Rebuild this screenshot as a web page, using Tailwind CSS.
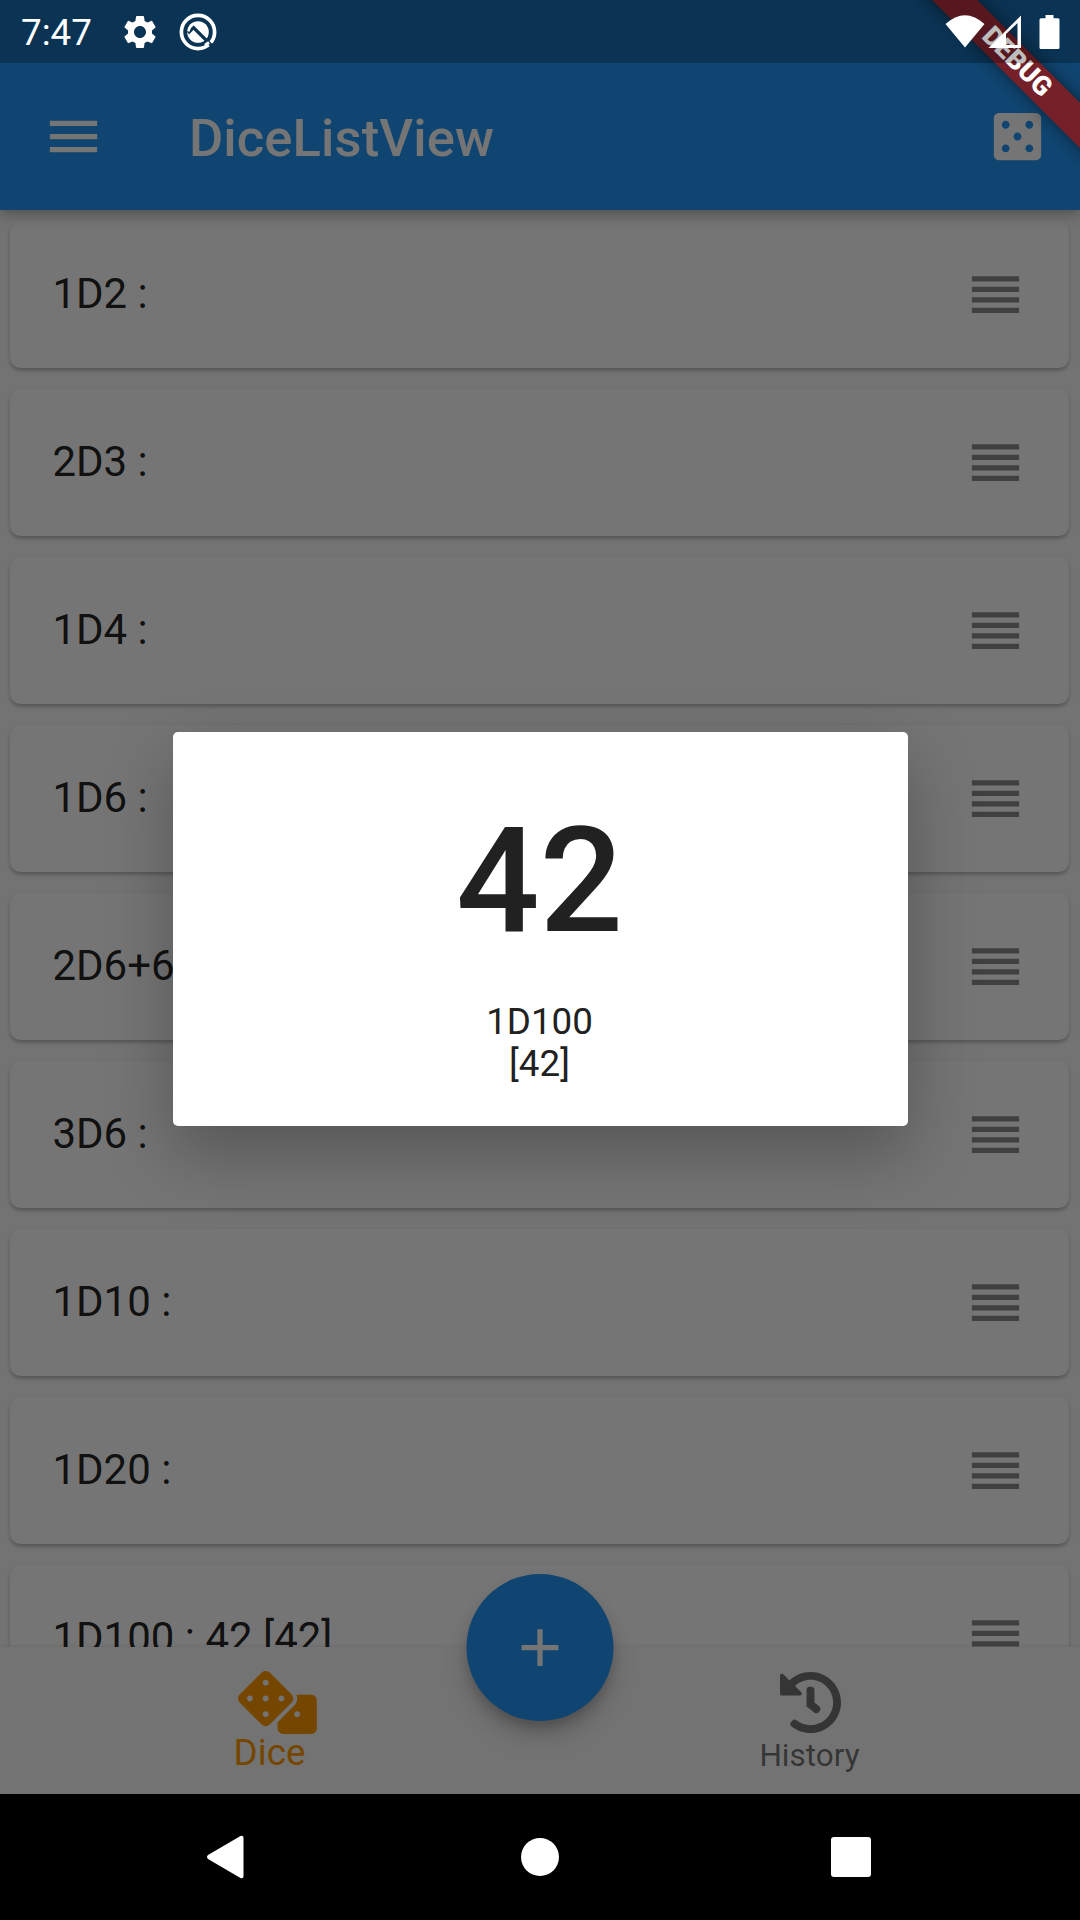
<!DOCTYPE html>
<html lang="en">
<head>
<meta charset="utf-8">
<title>DiceListView</title>
<script src="https://cdn.jsdelivr.net/npm/@tailwindcss/browser@4"></script>
</head>
<body class="bg-black">
<svg class="hidden" xmlns="http://www.w3.org/2000/svg">
  <symbol id="handle" viewBox="0 0 24 24"><path d="M3 15h18v-2H3v2zm0 4h18v-2H3v2zm0-8h18V9H3v2zm0-6v2h18V5H3z"/></symbol>
</svg>
<div class="relative flex h-[1920px] w-[1080px] flex-col overflow-hidden font-['Roboto',sans-serif]">

  <!-- App -->
  <div class="relative flex h-[1794px] flex-col overflow-hidden bg-[#fafafa]">
    <header class="relative z-10 flex h-[210px] shrink-0 items-center bg-[#2196f3] px-[42px] pt-[63px] text-white shadow-[0_4px_9px_rgb(0_0_0/0.16),0_5px_20px_rgb(0_0_0/0.16)]">
      <svg class="size-[63px]" viewBox="0 0 24 24" fill="currentColor"><path d="M3 18h18v-2H3v2zm0-5h18v-2H3v2zm0-7v2h18V6H3z"/></svg>
      <h1 class="ml-[84px] flex-1 pt-[3px] text-[52.5px] font-medium leading-none tracking-[0.1px]">DiceListView</h1>
      <svg class="-mr-[10.5px] size-[63px]" viewBox="0 0 24 24" fill="currentColor"><path d="M19 3H5c-1.100 0-2 .900-2 2v14c0 1.100.900 2 2 2h14c1.100 0 2-.900 2-2V5c0-1.100-.900-2-2-2zM7.500 18c-.830 0-1.500-.670-1.500-1.500S6.670 15 7.500 15s1.500.670 1.500 1.500S8.330 18 7.500 18zm0-9C6.670 9 6 8.330 6 7.500S6.670 6 7.500 6 9 6.670 9 7.500 8.330 9 7.500 9zm4.500 4.500c-.830 0-1.500-.670-1.500-1.500s.670-1.500 1.500-1.500 1.500.670 1.500 1.500-.670 1.500-1.500 1.500zm4.500 4.500c-.830 0-1.500-.670-1.500-1.500s.670-1.500 1.500-1.500 1.500.670 1.500 1.500-.670 1.500-1.500 1.500zm0-9c-.830 0-1.500-.670-1.500-1.500S15.670 6 16.500 6s1.500.670 1.500 1.500S17.330 9 16.500 9z" fill-rule="evenodd"/></svg>
    </header>

    <ul id="list" class="flex h-[1437px] shrink-0 flex-col gap-[21px] overflow-hidden pl-[10.4px] pr-[10.6px] pt-[10.5px] text-[42px] text-black/87"></ul>

    <nav class="relative grid h-[147px] shrink-0 grid-cols-2 bg-[#fafafa] text-center shadow-[0_-1px_4px_rgb(0_0_0/0.08)]">
      <div class="flex flex-col items-center pt-[24px] text-[#ff9800]">
        <svg class="ml-[15px] h-[63px] w-[79px]" viewBox="0 0 640 512" fill="currentColor"><path d="M592 192H473.26c12.69 29.59 7.12 65.2-17 89.32L320 417.58V464c0 26.51 21.49 48 48 48h224c26.51 0 48-21.49 48-48V240c0-26.51-21.49-48-48-48zM480 376c-13.25 0-24-10.75-24-24 0-13.26 10.75-24 24-24s24 10.74 24 24c0 13.25-10.75 24-24 24zm-46.37-186.7L258.7 14.37c-19.16-19.16-50.23-19.16-69.39 0L14.37 189.3c-19.16 19.16-19.16 50.23 0 69.39L189.3 433.63c19.16 19.16 50.23 19.16 69.39 0L433.63 258.7c19.16-19.17 19.16-50.24 0-69.4zM96 248c-13.25 0-24-10.75-24-24 0-13.26 10.75-24 24-24s24 10.74 24 24c0 13.25-10.75 24-24 24zm128 128c-13.25 0-24-10.75-24-24 0-13.26 10.75-24 24-24s24 10.74 24 24c0 13.25-10.75 24-24 24zm0-128c-13.25 0-24-10.75-24-24 0-13.26 10.75-24 24-24s24 10.74 24 24c0 13.25-10.75 24-24 24zm0-128c-13.25 0-24-10.75-24-24 0-13.26 10.75-24 24-24s24 10.74 24 24c0 13.25-10.75 24-24 24zm128 128c-13.25 0-24-10.75-24-24 0-13.26 10.75-24 24-24s24 10.74 24 24c0 13.25-10.75 24-24 24z"/></svg>
        <span class="-mt-[3px] mr-[1px] text-[36.75px] leading-[43px]">Dice</span>
      </div>
      <div class="flex flex-col items-center pt-[24px] text-black/54">
        <svg class="size-[63px]" viewBox="0 0 512 512" fill="currentColor"><path d="M504 255.531c.253 136.64-111.18 248.372-247.82 248.468-59.015.042-113.223-20.53-155.822-54.911-11.077-8.94-11.905-25.541-1.839-35.607l11.267-11.267c8.609-8.609 22.353-9.551 31.891-1.984C173.062 425.135 212.781 440 256 440c101.705 0 184-82.311 184-184 0-101.705-82.311-184-184-184-48.814 0-93.149 18.969-126.068 49.932l50.754 50.754c10.08 10.08 2.941 27.314-11.313 27.314H24c-8.837 0-16-7.163-16-16V38.627c0-14.254 17.234-21.393 27.314-11.314l49.372 49.372C129.209 34.136 189.552 8 256 8c136.81 0 247.747 110.78 248 247.531zm-180.912 78.784l9.823-12.63c8.138-10.463 6.253-25.542-4.21-33.679L288 256.349V152c0-13.255-10.745-24-24-24h-16c-13.255 0-24 10.745-24 24v135.651l65.409 50.874c10.463 8.137 25.541 6.253 33.679-4.210z"/></svg>
        <span class="mr-[1px] mt-[3px] text-[31.5px] leading-[37px]">History</span>
      </div>
      <button class="absolute -top-[73.5px] left-1/2 flex size-[147px] -translate-x-1/2 items-center justify-center rounded-full bg-[#2196f3] text-white shadow-[0_8px_13px_-3px_rgb(0_0_0/0.2),0_14px_24px_rgb(0_0_0/0.18)]">
        <svg class="size-[63px]" viewBox="0 0 24 24" fill="currentColor"><path d="M19 13h-6v6h-2v-6H5v-2h6V5h2v6h6v2z"/></svg>
      </button>
    </nav>

    <!-- Dialog over scrim -->
    <div class="absolute inset-0 z-20 flex items-center justify-center bg-black/54 pt-[63px]">
      <section class="flex h-[394px] w-[735px] flex-col items-center rounded-[5px] bg-white pr-px pt-[63px] text-center text-[#212121] shadow-[0_28px_68px_rgb(0_0_0/0.27)]">
        <p class="text-[147px] font-medium leading-[172px]">42</p>
        <p class="mt-[34px] text-[36.75px] leading-[42px]">1D100<br>[42]</p>
      </section>
    </div>

    <!-- Debug ribbon -->
    <div class="absolute left-[1017px] top-[62px] z-30 flex h-[31.5px] w-[240px] -translate-x-1/2 -translate-y-1/2 rotate-45 items-center justify-center bg-[#76202a] text-[26.8px] font-black leading-none text-white shadow-[0_0_16px_rgb(0_0_0/0.5)]">DEBUG</div>
  </div>

  <!-- System status bar -->
  <div class="absolute inset-x-0 top-0 z-40 flex h-[63px] items-center bg-black/26 pl-[21px] text-white">
    <span class="pt-[3px] text-[36.75px] leading-none">7:47</span>
    <svg class="ml-[28px] size-[40px]" viewBox="0 0 24 24" fill="currentColor"><path d="M19.140 12.940c.040-.300.060-.610.060-.940 0-.320-.020-.640-.070-.940l2.030-1.580c.180-.140.230-.410.120-.610l-1.920-3.320c-.120-.220-.370-.290-.590-.220l-2.390.960c-.500-.380-1.030-.700-1.620-.940l-.360-2.540c-.040-.240-.240-.410-.480-.410h-3.840c-.240 0-.430.170-.470.410l-.360 2.540c-.590.240-1.130.570-1.620.940l-2.390-.960c-.220-.080-.470 0-.590.220L2.740 8.870c-.120.210-.080.470.120.610l2.030 1.580c-.050.300-.090.630-.090.940s.020.640.070.940l-2.030 1.580c-.180.140-.230.410-.120.610l1.920 3.320c.120.220.370.290.590.220l2.390-.960c.500.380 1.030.700 1.620.940l.360 2.540c.050.240.240.410.480.410h3.840c.240 0 .440-.170.470-.410l.360-2.540c.590-.240 1.130-.560 1.620-.940l2.390.960c.220.080.470 0 .590-.220l1.920-3.320c.120-.220.070-.470-.120-.610l-2.010-1.580zM12 15.600c-1.980 0-3.600-1.620-3.600-3.600s1.620-3.600 3.600-3.600 3.600 1.620 3.600 3.600-1.620 3.600-3.600 3.600z"/></svg>
    <svg class="ml-[18px] size-[40px]" viewBox="0 0 40 40" fill="none">
      <circle cx="20" cy="20" r="16.600" stroke="#fff" stroke-width="3.700"/>
      <circle cx="20" cy="20" r="10.800" fill="#fff"/>
      <path d="M10 21l5.500-5.500L35 35" stroke="#0c3350" stroke-width="3.200"/>
      <path d="M10.500 19.500Q11.500 15 15.500 12" stroke="#fff" stroke-width="2"/>
      <path d="M11 25l4.500-4.500L24 29" stroke="#fff" stroke-width="1.500"/>
      <path d="M27 33.200l4-2.700" stroke="#fff" stroke-width="3"/>
    </svg>
    <div class="ml-auto flex items-center pr-[20px]">
      <svg class="h-[34px] w-[40px]" viewBox="0 0 40 34" fill="#fff"><path d="M20 32.500L.500 9Q20-8.500 39.500 9z"/></svg>
      <svg class="ml-[3px] h-[34px] w-[34px]" viewBox="0 0 34 34" fill="#fff"><path fill-rule="evenodd" d="M.5 33L33 .5V33zM18 19v11h11.500V8z"/></svg>
      <svg class="ml-[17px] h-[34px] w-[21px]" viewBox="0 0 21 34" fill="#fff"><path d="M6.500 0h8v3.300H19a1.500 1.500 0 0 1 1.500 1.500v27.700A1.500 1.500 0 0 1 19 34H2a1.500 1.500 0 0 1-1.500-1.500V4.800A1.500 1.500 0 0 1 2 3.300h4.500z"/></svg>
    </div>
  </div>

  <!-- System navigation -->
  <div class="flex h-[126px] shrink-0 items-center justify-between bg-black pl-[206px] pr-[209px]">
    <svg class="h-[44px] w-[38px]" viewBox="0 0 38 44" fill="#fff"><path d="M2 20Q0 22 2 24L34.500 43Q37.500 44 37.500 41V3Q37.500 0 34.500 1z"/></svg>
    <div class="ml-[38px] size-[38px] rounded-full bg-white"></div>
    <div class="ml-[33px] size-[40px] rounded-[3px] bg-white"></div>
  </div>
</div>
<script>
  document.getElementById('list').innerHTML = ['1D2 :', '2D3 :', '1D4 :', '1D6 :', '2D6+6 :', '3D6 :', '1D10 :', '1D20 :', '1D100 : 42 [42]'].map(t =>
    `<li class="flex h-[147px] shrink-0 items-center justify-between rounded-[10.5px] bg-white px-[42px] shadow-[0_3px_3px_rgb(0_0_0/0.14),0_2px_5px_rgb(0_0_0/0.12)]"><span class="-mt-[2px]">${t}</span><svg class="size-[63px] fill-black/45"><use href="#handle"/></svg></li>`).join('');
</script>
</body>
</html>
